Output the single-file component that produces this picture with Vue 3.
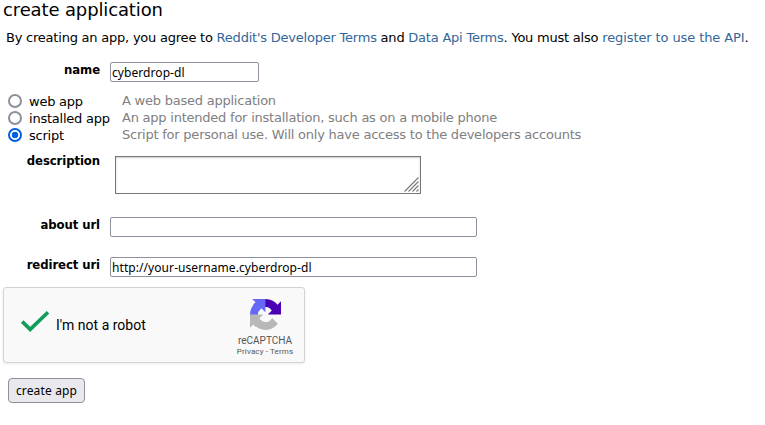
<script setup>
import { ref } from 'vue'

const name = ref('cyberdrop-dl')
const description = ref('')
const aboutUrl = ref('')
const redirectUri = ref('http://your-username.cyberdrop-dl')
const kind = ref('script')
const kinds = [
  { id: 'web', label: 'web app', hint: 'A web based application' },
  { id: 'installed', label: 'installed app', hint: 'An app intended for installation, such as on a mobile phone' },
  { id: 'script', label: 'script', hint: 'Script for personal use. Will only have access to the developers accounts' },
]
</script>

<template>
  <form class="page" @submit.prevent>
    <h1><span>create application</span></h1>
    <p class="intro"><span>By creating an app, you agree to <a>Reddit's Developer Terms</a> and <a>Data Api Terms</a>. You must also <a class="register">register to use the API</a>.</span></p>

    <div class="row name-row">
      <label>name</label>
      <input v-model="name" class="field short" type="text" spellcheck="false" />
    </div>

    <div class="kinds">
      <label v-for="k in kinds" :key="k.id" class="kind">
        <input v-model="kind" class="radio" type="radio" :value="k.id" />
        <span class="kind-label">{{ k.label }}</span>
        <span class="hint">{{ k.hint }}</span>
      </label>
    </div>

    <div class="row desc-row">
      <label>description</label>
      <div class="area">
        <textarea v-model="description"></textarea>
        <svg class="grip" width="15" height="15" viewBox="0 0 15 15">
          <path d="M.5 14.5 14.5.5M4.5 14.5l10-10M8.5 14.5l6-6M12.5 14.5l2-2" />
        </svg>
      </div>
    </div>

    <div class="row about-row">
      <label>about url</label>
      <input v-model="aboutUrl" class="field" type="text" />
    </div>
    <div class="row redirect-row">
      <label>redirect uri</label>
      <input v-model="redirectUri" class="field" type="text" spellcheck="false" />
    </div>

    <div class="captcha">
      <svg class="check" width="30" height="24" viewBox="0 0 30 24">
        <path d="M1.2 11.6 9.2 19.4 27 2.2" />
      </svg>
      <span class="robot">I'm not a robot</span>
      <div class="brand">
        <svg width="31" height="31" viewBox="0 0 64 64">
          <path d="M64 31.955l-.033-1.37V4.687l-7.16 7.16C50.948 4.674 42.033.093 32.05.093c-10.4 0-19.622 4.96-25.458 12.64l11.736 11.86a15.55 15.55 0 0 1 4.754-5.334c2.05-1.6 4.952-2.906 8.968-2.906.485 0 .86.057 1.135.163 4.976.393 9.288 3.14 11.828 7.124l-8.307 8.307L64 31.953" class="dark" />
          <path class="light" d="M31.862.094l-1.37.033H4.594l7.16 7.16C4.58 13.147 0 22.06 0 32.046c0 10.4 4.96 19.622 12.64 25.458L24.5 45.768a15.55 15.55 0 0 1-5.334-4.754c-1.6-2.05-2.906-4.952-2.906-8.968 0-.485.057-.86.163-1.135.393-4.976 3.14-9.288 7.124-11.828l8.307 8.307L31.86.095" />
          <path class="gray" d="M.001 32.045l.033 1.37v25.898l7.16-7.16c5.86 7.173 14.774 11.754 24.76 11.754 10.4 0 19.622-4.96 25.458-12.64l-11.736-11.86a15.55 15.55 0 0 1-4.754 5.334c-2.05 1.6-4.952 2.906-8.968 2.906-.485 0-.86-.057-1.135-.163-4.976-.393-9.288-3.14-11.828-7.124l8.307-8.307L0 32.047" />
        </svg>
        <span class="brand-name">reCAPTCHA</span>
        <span class="legal">Privacy - Terms</span>
      </div>
    </div>

    <button class="submit" type="submit">create app</button>
  </form>
</template>

<style>
body { background: #fff; overflow: hidden; }
</style>

<style scoped>
.page { width: 765px; height: 425px; color: #000; font: 13px/17px "DejaVu Sans", sans-serif; letter-spacing: -0.228px; white-space: nowrap; overflow: hidden; }
.page * { box-sizing: border-box; }
h1 { margin: 0; padding-left: 3px; height: 26px; font-size: 18px; font-weight: 400; line-height: 20px; letter-spacing: -0.13px; }
.intro { margin: 0; padding: 3px 0 0 6px; height: 36px; letter-spacing: -0.222px; }
a { color: #369; }
.register { letter-spacing: -0.1px; }
.row { display: flex; align-items: flex-start; }
.row > label { width: 100px; margin-right: 10px; text-align: right; font: bold 13px/16px "DejaVu Sans Condensed", "DejaVu Sans", sans-serif; letter-spacing: -0.1px; }
.name-row { height: 30px; }
.field { width: 367px; height: 20px; margin: 0; padding: 1px 1px 0; border: 1px solid #8f8f9d; border-radius: 2px; background: #fff; color: #000; font: 12px/16px "Noto Sans", sans-serif; letter-spacing: 0.07px; }
.field.short { width: 149px; }
.kinds { height: 61px; }
.kind { display: flex; height: 17px; padding-left: 8px; }
.radio { appearance: none; width: 14px; height: 14px; margin: 2px 7px 0 0; border: 2px solid #8f8f9d; border-radius: 50%; background: #fff; }
.radio:checked { border-color: #0060df; background: radial-gradient(circle, #0060df 3px, #fff 3.6px); }
.kind-label { width: 93px; padding-top: 1px; }
.hint { color: #808080; }
.desc-row { height: 64px; }
.area { position: relative; width: 306px; height: 38px; margin: 3px 0 0 5px; }
textarea { display: block; width: 306px; height: 38px; border: 1px solid #777; box-shadow: inset 0 1px 2px #ccc; resize: none; }
textarea::-webkit-resizer { display: none; }
.grip { position: absolute; right: 2px; bottom: 2px; fill: none; stroke: #777; stroke-width: 1.1; }
.about-row { height: 40px; }
.redirect-row { height: 30px; }
.captcha { display: flex; width: 302px; height: 76px; margin-left: 3px; border: 1px solid #d3d3d3; border-radius: 3px; background: #f9f9f9; box-shadow: 0 1px 3px rgba(0, 0, 0, .08); }
.check { margin: 22px 0 0 17px; fill: none; stroke: #0f9d58; stroke-width: 3.6; }
.robot { width: 171px; margin: 29px 0 0 5px; font: 14px/17px Roboto, sans-serif; letter-spacing: 0; }
.brand { display: flex; flex-direction: column; align-items: center; width: 76px; padding-top: 11px; color: #555; }
.dark { fill: #4a00b5; }
.light { fill: #6767f8; }
.gray { fill: #b8b8b8; }
.brand-name { margin-top: 5px; font: 10px/12px Roboto, sans-serif; letter-spacing: 0; }
.legal { font: 8px/10px Roboto, sans-serif; letter-spacing: 0.13px; }
.submit { display: block; width: 77px; height: 25px; margin: 15px 0 0 8px; padding: 0; border: 1px solid #8f8f9d; border-radius: 4px; background: #e9e9ed; color: #000; font: 12px/20px "Noto Sans", sans-serif; letter-spacing: 0.15px; }
</style>
